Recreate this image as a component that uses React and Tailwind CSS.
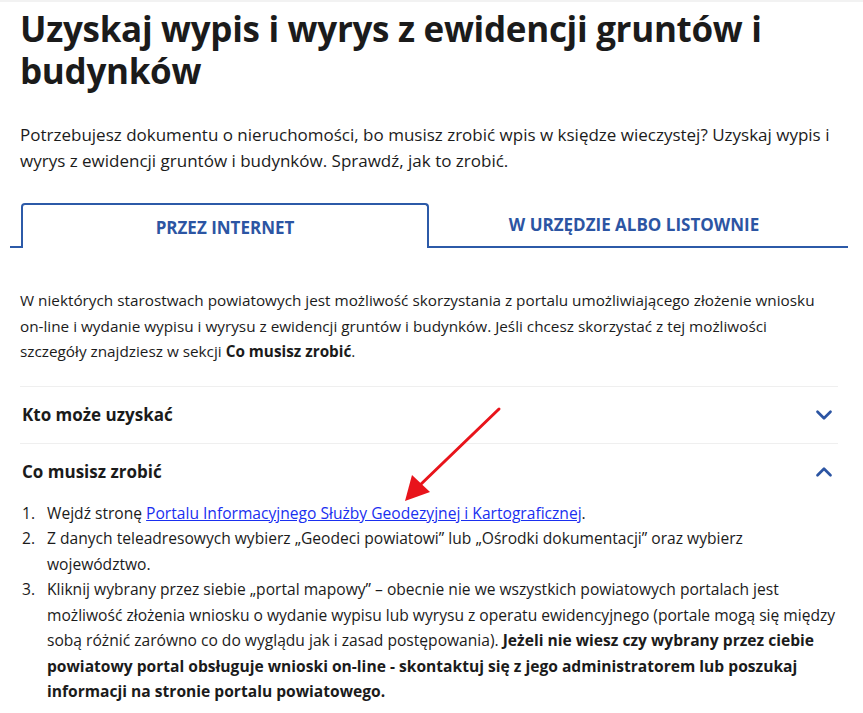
import { ChevronDown, ChevronUp } from 'lucide-react';

const App = () => {
  return (
    <div className="min-h-screen bg-white text-[#1b1b1b] border-t-2 border-[#f2f2f2]" style={{ fontFamily: '"Open Sans", "Noto Sans", sans-serif' }}>
      <div className="pl-[20px] pr-[25px] relative">
        <h1 className="text-[35px] font-bold leading-[42px] tracking-[-0.3px] pt-[6px]">
          Uzyskaj wypis i wyrys z ewidencji gruntów i budynków
        </h1>

        <p className="mt-[30px] text-[17px] leading-[26px]">
          Potrzebujesz dokumentu o nieruchomości, bo musisz zrobić wpis w księdze wieczystej? Uzyskaj wypis i wyrys z ewidencji gruntów i budynków. Sprawdź, jak to zrobić.
        </p>

        {/* tabs */}
        <div className="mt-[29px] -mx-[10px] flex items-end">
          <div className="w-[11px] h-[2px] bg-[#2c5aa8]" />
          <div className="w-[408px] h-[45px] border-2 border-b-0 border-[#2c5aa8] rounded-t-[4px] flex items-center justify-center">
            <span className="text-[17px] font-bold text-[#2c55a3] uppercase pt-[2px]">Przez internet</span>
          </div>
          <div className="flex-1 h-[45px] border-b-2 border-[#2c5aa8] flex items-center justify-center">
            <span className="text-[17px] font-bold text-[#2c55a3] uppercase mr-[9px]">W urzędzie albo listownie</span>
          </div>
        </div>

        <p className="mt-[40px] text-[15.3px] leading-[25.6px]">
          W niektórych starostwach powiatowych jest możliwość skorzystania z portalu umożliwiającego złożenie wniosku<br />
          on-line i wydanie wypisu i wyrysu z ewidencji gruntów i budynków. Jeśli chcesz skorzystać z tej możliwości<br />
          szczegóły znajdziesz w sekcji <strong className="font-bold">Co musisz zrobić</strong>.
        </p>

        <div className="mt-[21px] border-t border-[#efefef]">
          <div className="h-[56px] flex items-center justify-between pl-[2px] pr-[1px]">
            <span className="text-[17px] font-bold">Kto może uzyskać</span>
            <ChevronDown size={26} strokeWidth={2.5} className="text-[#2c55a3]" />
          </div>
        </div>
        <div className="border-t border-[#efefef]">
          <div className="h-[56px] flex items-center justify-between pl-[2px] pr-[1px]">
            <span className="text-[17px] font-bold">Co musisz zrobić</span>
            <ChevronUp size={26} strokeWidth={2.5} className="text-[#2c55a3]" />
          </div>
          <ol className="mt-[1px] text-[15.6px] leading-[25.5px]">
            <li className="flex">
              <span className="w-[27px] pl-[2px] shrink-0">1.</span>
              <span>
                Wejdź stronę <a href="#" className="text-[#1a2ff0] underline">Portalu Informacyjnego Służby Geodezyjnej i Kartograficznej</a>.
              </span>
            </li>
            <li className="flex">
              <span className="w-[27px] pl-[2px] shrink-0">2.</span>
              <span>Z danych teleadresowych wybierz „Geodeci powiatowi” lub „Ośrodki dokumentacji” oraz wybierz<br />województwo.</span>
            </li>
            <li className="flex">
              <span className="w-[27px] pl-[2px] shrink-0">3.</span>
              <span>
                Kliknij wybrany przez siebie „portal mapowy” – obecnie nie we wszystkich powiatowych portalach jest<br />
                możliwość złożenia wniosku o wydanie wypisu lub wyrysu z operatu ewidencyjnego (portale mogą się między<br />
                sobą różnić zarówno co do wyglądu jak i zasad postępowania). <strong className="font-bold">Jeżeli nie wiesz czy wybrany przez ciebie<br />
                powiatowy portal obsługuje wnioski on-line - skontaktuj się z jego administratorem lub poszukaj<br />
                informacji na stronie portalu powiatowego.</strong>
              </span>
            </li>
          </ol>
        </div>

        {/* red annotation arrow */}
        <svg className="absolute left-[378px] top-[403px] pointer-events-none" width="130" height="100" viewBox="0 0 130 100">
          <line x1="121" y1="4" x2="40" y2="82" stroke="#e8141b" strokeWidth="3" strokeLinecap="round" />
          <polygon points="27,96 34,70 52,87" fill="#e8141b" />
        </svg>
      </div>
    </div>
  );
};

export default App;
